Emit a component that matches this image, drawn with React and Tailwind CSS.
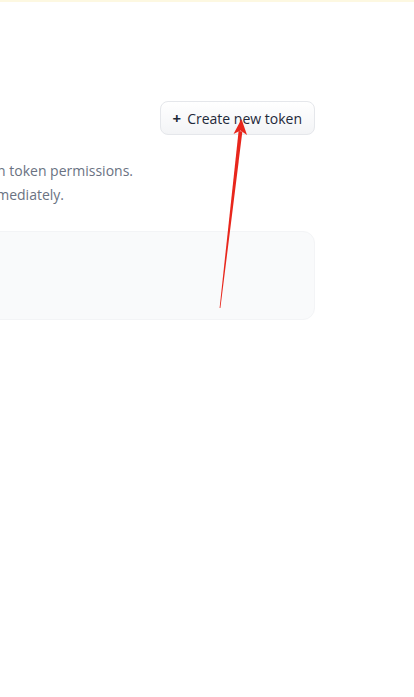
import React from "react";

// the page is shown cropped: the text runs off the left edge, so each line is
// pinned by its end instead of its start
const lines = [
  {
    text: "Access tokens authenticate your identity to the Hugging Face Hub and allow applications to perform actions based on token permissions.",
    gap: "w-[281px]",
  },
  {
    text: "Do not share your Access Tokens with anyone; we regularly scan for leaked Access Tokens and remove them immediately.",
    gap: "w-[350px]",
  },
];

const Arrow = () => (
  <svg
    className="absolute left-0 top-0 pointer-events-none"
    width="414"
    height="697"
    viewBox="0 0 414 697"
  >
    <path d="M219.6 308 L238.6 131 L242.4 131.5 L220.4 308 Z" fill="#e8261c" />
    <path d="M241.5 119 L233.5 134 L240.5 130.5 L247 135 Z" fill="#e8261c" />
  </svg>
);

export default function App() {
  return (
    <div className="relative w-[414px] h-[697px] overflow-hidden bg-white font-['Source_Sans_Pro','Open_Sans',sans-serif]">
      <div className="h-[2px] w-full bg-[#fdf8e1]" />
      <div className="flex justify-end pr-[99px] pt-[99px]">
        <button className="flex items-center gap-1.5 h-[34px] px-3 rounded-lg border border-gray-200 bg-gradient-to-b from-white to-gray-100 text-[14px] text-gray-800">
          <span className="font-bold text-[15px] leading-none">+</span>
          <span>Create new token</span>
        </button>
      </div>
      <div className="mt-[24px] flex flex-col text-[14px] leading-6 text-gray-500">
        {lines.map((l) => (
          <div key={l.gap} className="flex justify-end">
            <span className="shrink-0 whitespace-nowrap">{l.text}</span>
            <span className={`shrink-0 ${l.gap}`} />
          </div>
        ))}
      </div>
      <div className="flex justify-end pr-[99px] mt-[24px]">
        <div className="w-[700px] shrink-0 h-[89px] rounded-xl border border-gray-100 bg-gray-50" />
      </div>
      <Arrow />
    </div>
  );
}
